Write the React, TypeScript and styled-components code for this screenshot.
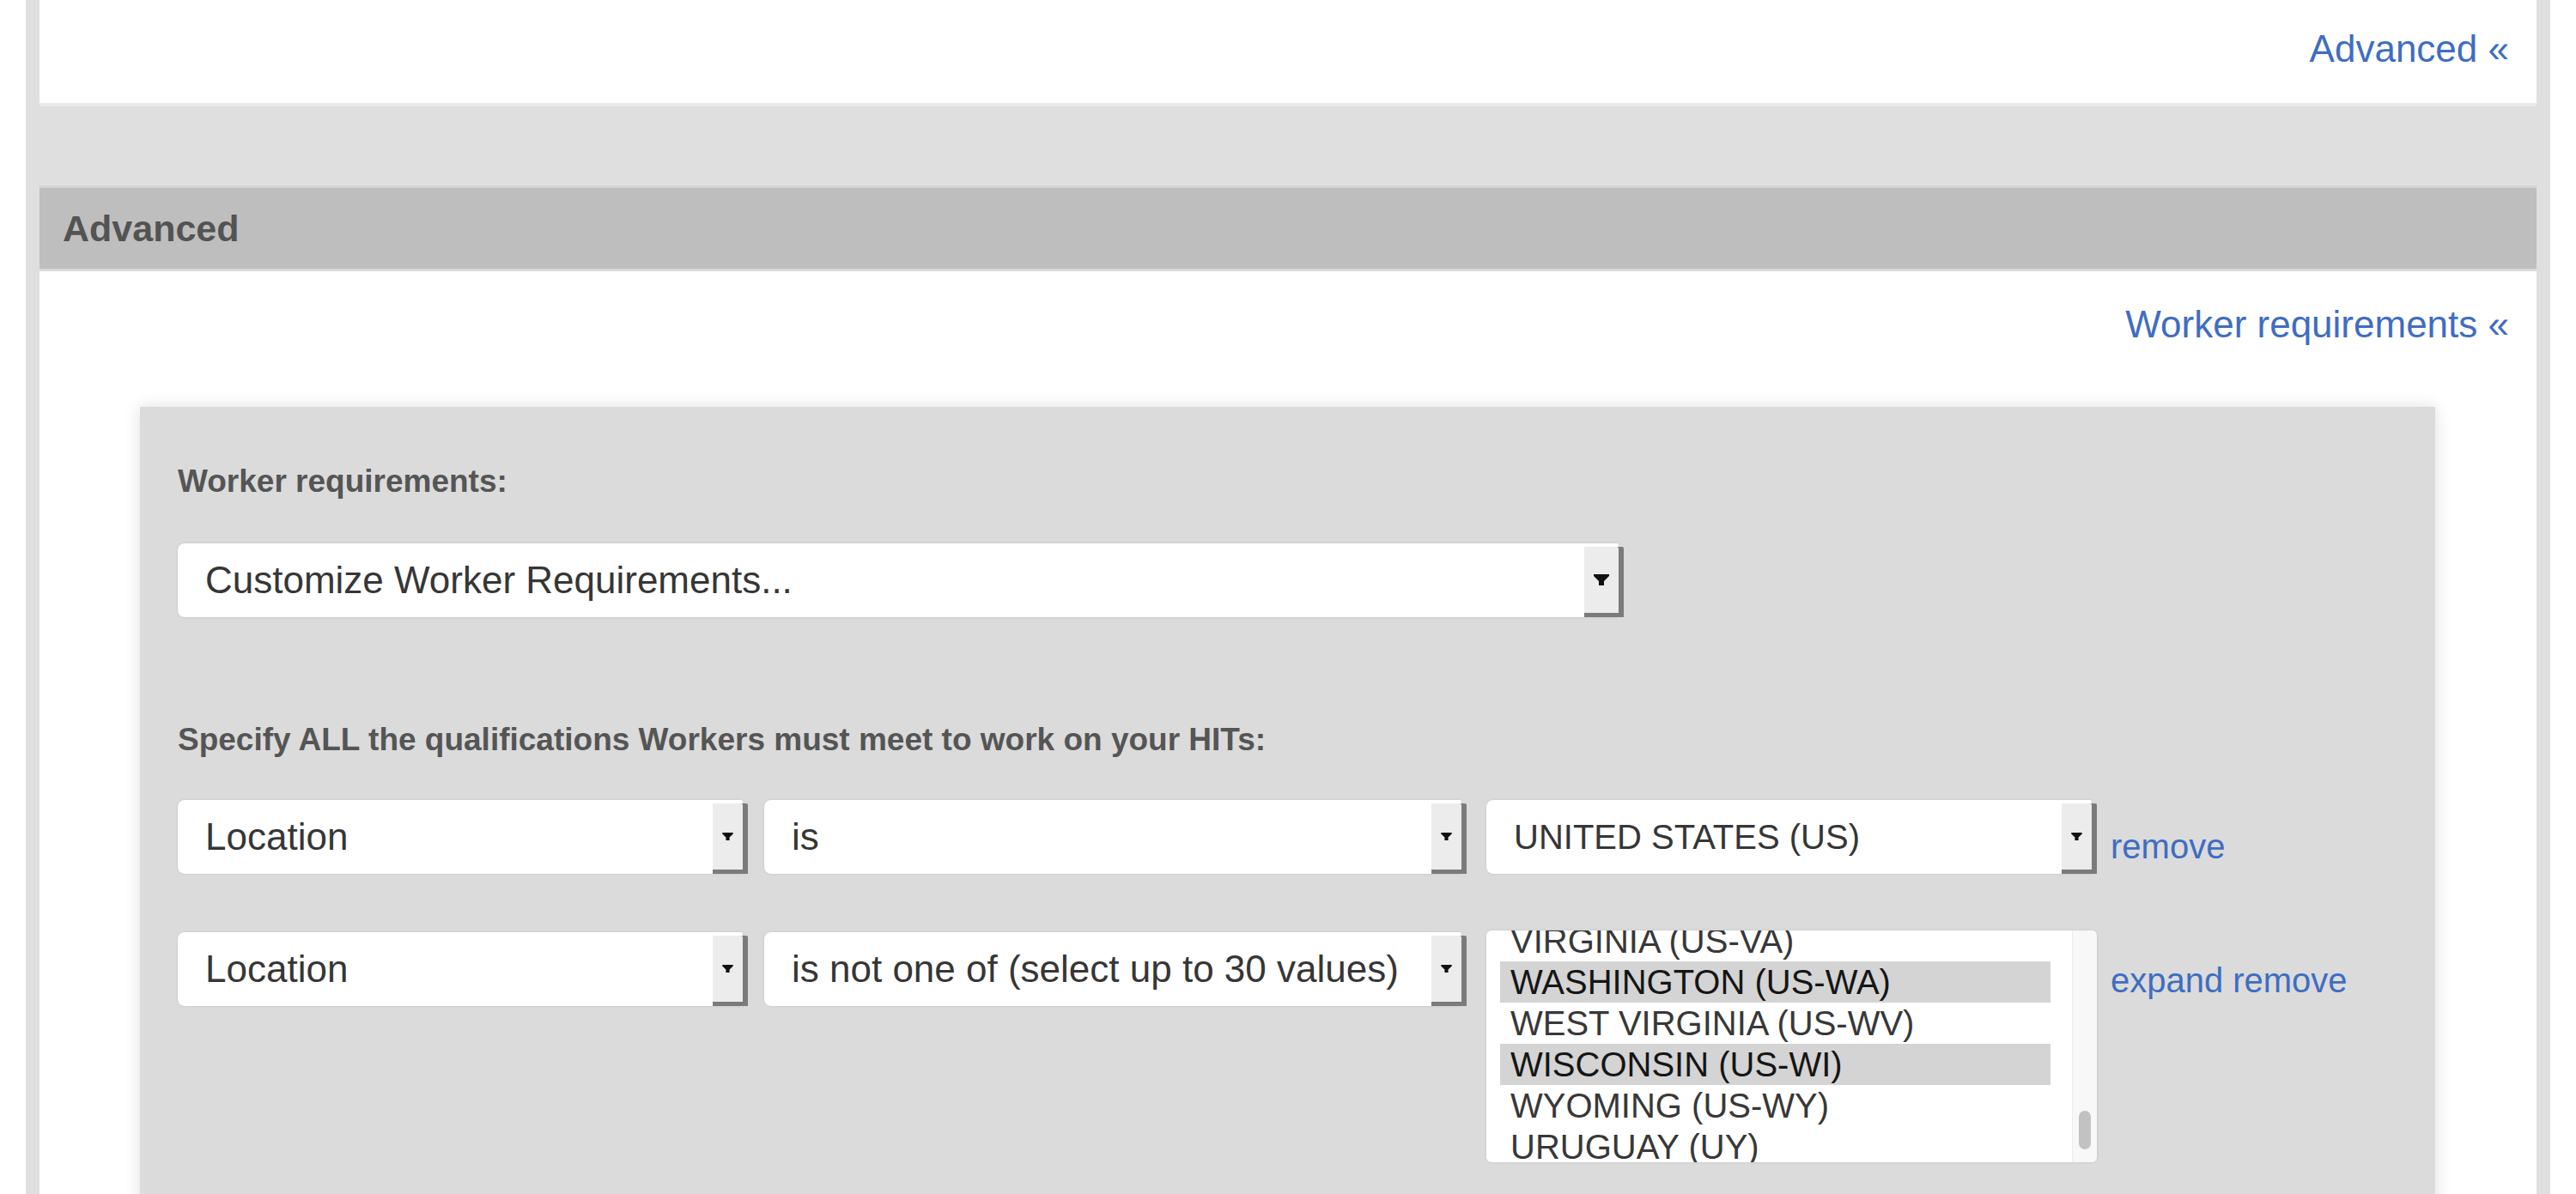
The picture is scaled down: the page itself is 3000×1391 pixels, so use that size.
import React from "react";
import styled, { createGlobalStyle } from "styled-components";

const GlobalStyle = createGlobalStyle`
  html, body { margin: 0; padding: 0; background: #ffffff; }
  body { font-family: "Liberation Sans", Arial, sans-serif; }
`;

const Frame = styled.div`
  margin: 0 30px;
  border-left: 16px solid #dfdfdf;
  border-right: 16px solid #dfdfdf;
  background: #ffffff;
  min-height: 1391px;
  overflow: hidden;
`;

const TopSection = styled.div`
  height: 120px;
  box-sizing: border-box;
  padding: 31px 32px 0 0;
  display: flex;
  justify-content: flex-end;
  align-items: flex-start;
`;

const Link = styled.a<{ $size?: number; $top?: number }>`
  font-size: ${(p) => p.$size ?? 44}px;
  line-height: ${(p) => ((p.$size ?? 44) >= 44 ? 52 : 48)}px;
  margin-top: ${(p) => p.$top ?? 0}px;
  color: #3f6dc2;
  text-decoration: none;
  white-space: nowrap;
  cursor: pointer;
`;

const Band = styled.div`
  height: 96px;
  box-sizing: border-box;
  background: #dfdfdf;
  border-top: 4px solid #e9e9e9;
`;

const SectionHeader = styled.div`
  height: 100px;
  box-sizing: border-box;
  background: #bebebe;
  border-top: 3px solid #d5d5d5;
  border-bottom: 3px solid #d9d9d9;
  padding-left: 27px;
  display: flex;
  align-items: center;
  font-weight: bold;
  font-size: 43px;
  color: #535353;
`;

const SectionBody = styled.div`
  padding: 36px 32px 0 0;
  display: flex;
  flex-direction: column;
`;

const LinkRow = styled.div`
  display: flex;
  justify-content: flex-end;
`;

const Panel = styled.div`
  margin: 70px 86px 0 117px;
  background: #dbdbdb;
  padding: 65px 44px 120px;
  box-shadow: 0 0 18px rgba(0, 0, 0, 0.13);
  display: flex;
  flex-direction: column;
`;

const FieldLabel = styled.div<{ $top?: number }>`
  font-weight: bold;
  font-size: 37px;
  line-height: 44px;
  color: #555555;
  margin-top: ${(p) => p.$top ?? 0}px;
  white-space: nowrap;
`;

const Select = styled.div<{ $w: number; $top?: number }>`
  width: ${(p) => p.$w}px;
  height: 86px;
  margin-top: ${(p) => p.$top ?? 0}px;
  flex: none;
  display: flex;
  align-items: stretch;
  background: #ffffff;
  border-radius: 8px 2px 2px 8px;
  box-shadow: 0 0 3px rgba(0, 0, 0, 0.12);
`;

const SelectText = styled.div<{ $size?: number }>`
  flex: 1;
  min-width: 0;
  padding-left: 32px;
  display: flex;
  align-items: center;
  font-size: ${(p) => p.$size ?? 44}px;
  color: #363636;
  white-space: nowrap;
  overflow: hidden;
`;

const ArrowBox = styled.div<{ $w: number }>`
  width: ${(p) => p.$w}px;
  margin: 4px 0 5px;
  background: #ececec;
  border-radius: 0 2px 0 0;
  box-shadow: 0 5px 0 #7b7b7b, 6px 5px 0 #7b7b7b, 6px 0 0 #7b7b7b;
  display: flex;
  align-items: center;
  justify-content: center;
`;

const Row = styled.div<{ $top: number }>`
  display: flex;
  align-items: flex-start;
  margin-top: ${(p) => p.$top}px;
`;

const Cell = styled.div<{ $w: number; $ml: number }>`
  width: ${(p) => p.$w}px;
  margin-left: ${(p) => p.$ml}px;
  flex: none;
  display: flex;
`;

const LinkGroup = styled.div<{ $top: number }>`
  margin-left: 16px;
  margin-top: ${(p) => p.$top}px;
  display: flex;
  gap: 11px;
`;

const Listbox = styled.div`
  width: 711px;
  height: 270px;
  flex: none;
  background: #ffffff;
  border-radius: 6px;
  box-shadow: 0 0 3px rgba(0, 0, 0, 0.12);
  display: flex;
  overflow: hidden;
`;

const OptionList = styled.div`
  flex: 1;
  padding: 0 25px 0 16px;
  margin-top: -12px;
`;

const Option = styled.div<{ $selected?: boolean }>`
  height: 48px;
  line-height: 48px;
  padding-left: 12px;
  font-size: 40px;
  white-space: nowrap;
  color: ${(p) => (p.$selected ? "#151515" : "#383838")};
  background: ${(p) => (p.$selected ? "#d4d4d4" : "transparent")};
`;

const ScrollTrack = styled.div`
  width: 29px;
  box-sizing: border-box;
  padding-top: 210px;
  background: #f8f8f8;
  border-left: 1px solid #ececec;
  display: flex;
  justify-content: center;
`;

const Thumb = styled.div`
  width: 14px;
  height: 45px;
  border-radius: 7px;
  background: #c2c2c2;
`;

const Arrow = ({ w }: { w: number }) => (
  <svg width={w} height={Math.round(w * 0.7)} viewBox="0 0 18 13">
    <path d="M0 0 H18 V2 L12 8 V13 H6 V8 L0 2 Z" fill="#111" />
  </svg>
);

type DropProps = { w: number; text: string; arrowW: number; icon: number; size?: number; top?: number };

const Dropdown = ({ w, text, arrowW, icon, size, top }: DropProps) => (
  <Select $w={w} $top={top}>
    <SelectText $size={size}>{text}</SelectText>
    <ArrowBox $w={arrowW}>
      <Arrow w={icon} />
    </ArrowBox>
  </Select>
);

const options = [
  { label: "VIRGINIA (US-VA)", selected: false },
  { label: "WASHINGTON (US-WA)", selected: true },
  { label: "WEST VIRGINIA (US-WV)", selected: false },
  { label: "WISCONSIN (US-WI)", selected: true },
  { label: "WYOMING (US-WY)", selected: false },
  { label: "URUGUAY (UY)", selected: false },
];

export default function App() {
  return (
    <>
      <GlobalStyle />
      <Frame>
        <TopSection>
          <Link>Advanced «</Link>
        </TopSection>
        <Band />
        <SectionHeader>Advanced</SectionHeader>
        <SectionBody>
          <LinkRow>
            <Link>Worker requirements «</Link>
          </LinkRow>
          <Panel>
            <FieldLabel>Worker requirements:</FieldLabel>
            <Row $top={50}>
              <Dropdown w={1678} text="Customize Worker Requirements..." arrowW={40} icon={18} />
            </Row>
            <FieldLabel $top={121}>
              Specify ALL the qualifications Workers must meet to work on your HITs:
            </FieldLabel>
            <Row $top={48}>
              <Cell $w={658} $ml={0}>
                <Dropdown w={658} text="Location" arrowW={35} icon={13} />
              </Cell>
              <Cell $w={812} $ml={25}>
                <Dropdown w={812} text="is" arrowW={35} icon={13} />
              </Cell>
              <Cell $w={711} $ml={29}>
                <Dropdown w={705} text="UNITED STATES (US)" arrowW={35} icon={13} size={40} />
              </Cell>
              <LinkGroup $top={30}>
                <Link $size={40}>remove</Link>
              </LinkGroup>
            </Row>
            <Row $top={66}>
              <Cell $w={658} $ml={0}>
                <Dropdown w={658} text="Location" arrowW={35} icon={13} top={2} />
              </Cell>
              <Cell $w={812} $ml={25}>
                <Dropdown
                  w={812}
                  text="is not one of (select up to 30 values)"
                  arrowW={35}
                  icon={13}
                  top={2}
                />
              </Cell>
              <Cell $w={711} $ml={29}>
                <Listbox>
                  <OptionList>
                    {options.map((o) => (
                      <Option key={o.label} $selected={o.selected}>
                        {o.label}
                      </Option>
                    ))}
                  </OptionList>
                  <ScrollTrack>
                    <Thumb />
                  </ScrollTrack>
                </Listbox>
              </Cell>
              <LinkGroup $top={34}>
                <Link $size={40}>expand</Link>
                <Link $size={40}>remove</Link>
              </LinkGroup>
            </Row>
          </Panel>
        </SectionBody>
      </Frame>
    </>
  );
}
